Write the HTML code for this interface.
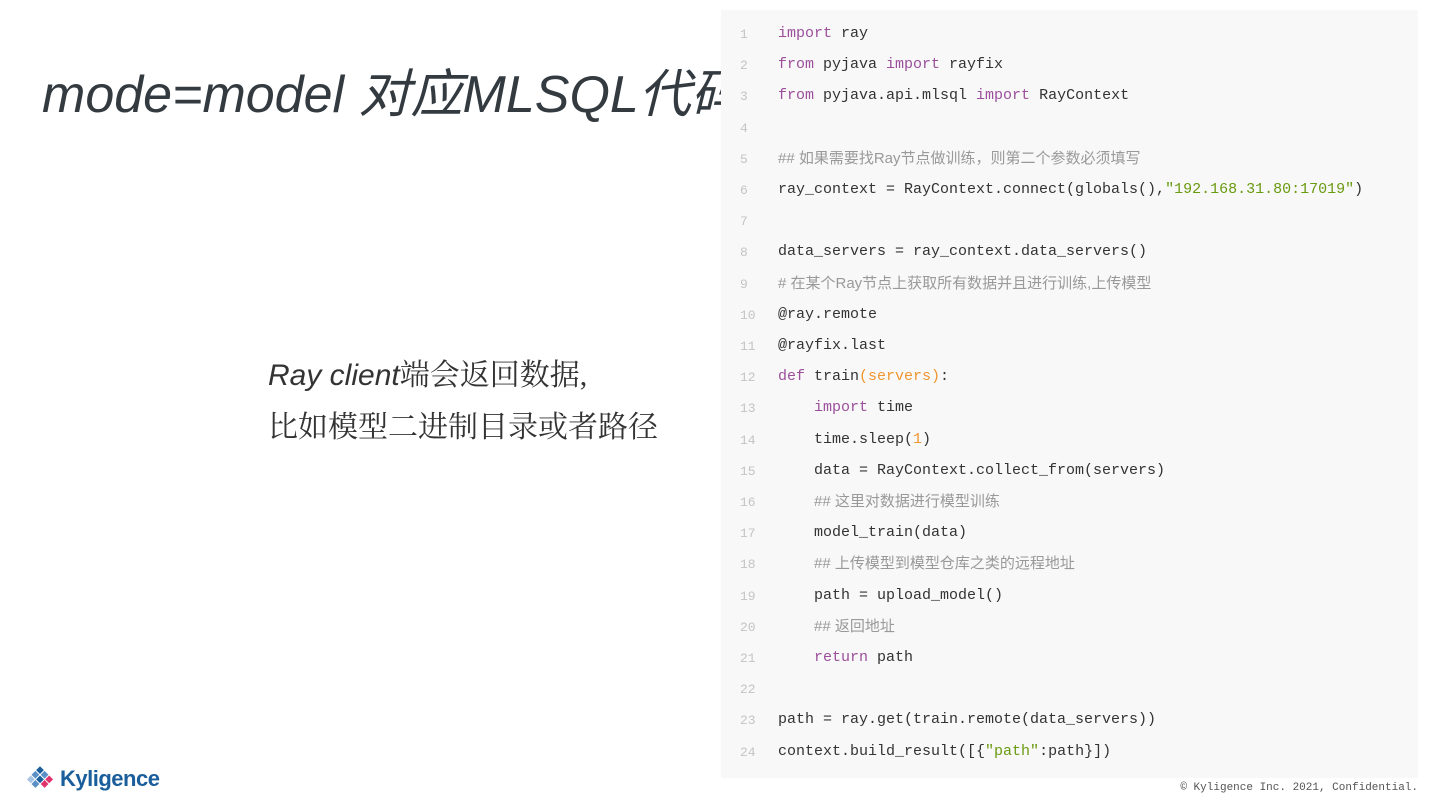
<!DOCTYPE html>
<html><head><meta charset="utf-8"><style>
body{margin:0;width:1440px;height:810px;background:#fff;position:relative;overflow:hidden;font-family:"Liberation Sans","Noto Sans CJK SC",sans-serif;}
.title{position:absolute;left:42px;top:52px;font-size:52px;color:#333a40;white-space:nowrap;font-style:italic;z-index:0}
.sub{position:absolute;left:268px;top:350px;font-size:30px;color:#333;line-height:52px;font-family:"Liberation Serif","Noto Serif CJK SC",serif;}
.panel{position:absolute;left:721px;top:10px;width:697px;height:768px;background:#f8f8f9;z-index:1}
#code{position:relative;z-index:2}
.ln{position:absolute;left:740px;color:#c4c4c4;font:13px/20px "Liberation Mono",monospace;height:20px}
.cd{position:absolute;left:778px;color:#333;font:15px/20px "Liberation Mono","Noto Sans CJK SC",monospace;white-space:pre;height:20px}
.k{color:#9b4f9b}.s{color:#6a9a10}.o{color:#f0962e}.c{color:#999;font-family:"Liberation Sans","Noto Sans CJK SC",sans-serif;font-size:15px;line-height:20px}
.logo{position:absolute;left:26px;top:765px;display:flex;align-items:center;font:bold 22px "Liberation Sans",sans-serif;color:#1b5e9c;letter-spacing:-0.5px}
.foot{position:absolute;right:22px;top:782px;font:11px "Liberation Mono",monospace;color:#555;}
</style></head><body>
<div class="title">mode=model 对应MLSQL代码</div>
<div class="panel"></div>
<div class="sub"><i style="font-family:'Liberation Sans',sans-serif">Ray client</i>端会返回数据,<br>比如模型二进制目录或者路径</div>
<div id="code"></div>
<div class="logo"><svg width="34" height="28" viewBox="0 0 34 28"><g transform="rotate(45 14 14)"><rect x="5" y="5" width="5.5" height="5.5" fill="#1b5e9c"/><rect x="11.5" y="5" width="5.5" height="5.5" fill="#5b8fc7"/><rect x="18" y="5" width="5.5" height="5.5" fill="#e0336b"/><rect x="5" y="11.5" width="5.5" height="5.5" fill="#5b8fc7"/><rect x="11.5" y="11.5" width="5.5" height="5.5" fill="#1b5e9c"/><rect x="18" y="11.5" width="5.5" height="5.5" fill="#e0336b"/><rect x="5" y="18" width="5.5" height="5.5" fill="#a8c4e3"/><rect x="11.5" y="18" width="5.5" height="5.5" fill="#5b8fc7"/></g></svg>Kyligence</div>
<div class="foot">© Kyligence Inc. 2021, Confidential.</div>
<script>
var L=['<span class="k">import</span> ray','<span class="k">from</span> pyjava <span class="k">import</span> rayfix','<span class="k">from</span> pyjava.api.mlsql <span class="k">import</span> RayContext','','<span class="c">## 如果需要找Ray节点做训练，则第二个参数必须填写</span>','ray_context = RayContext.connect(globals(),<span class="s">"192.168.31.80:17019"</span>)','','data_servers = ray_context.data_servers()','<span class="c"># 在某个Ray节点上获取所有数据并且进行训练,上传模型</span>','@ray.remote','@rayfix.last','<span class="k">def</span> train<span class="o">(servers)</span>:','    <span class="k">import</span> time','    time.sleep(<span class="o">1</span>)','    data = RayContext.collect_from(servers)','    <span class="c">## 这里对数据进行模型训练</span>','    model_train(data)','    <span class="c">## 上传模型到模型仓库之类的远程地址</span>','    path = upload_model()','    <span class="c">## 返回地址</span>','    <span class="k">return</span> path','','path = ray.get(train.remote(data_servers))','context.build_result([{<span class="s">"path"</span>:path}])'];
var h='';L.forEach(function(t,i){var y=24+i*31.2;h+='<div class="ln" style="top:'+(y+1)+'px">'+(i+1)+'</div><div class="cd" style="top:'+y+'px">'+t+'</div>';});
document.getElementById('code').innerHTML=h;
</script>
</body></html>
